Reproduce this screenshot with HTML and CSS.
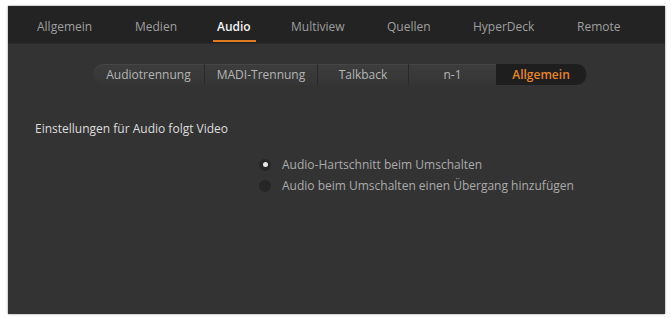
FILE: index.html
```html
<!DOCTYPE html>
<html>
<head>
<meta charset="utf-8">
<link rel="stylesheet" href="styles.css">
</head>
<body>
<div class="panel">
  <nav class="tabs">
    <span class="tab">Allgemein</span>
    <span class="tab">Medien</span>
    <span class="tab active">Audio</span>
    <span class="tab">Multiview</span>
    <span class="tab">Quellen</span>
    <span class="tab">HyperDeck</span>
    <span class="tab">Remote</span>
  </nav>
  <div class="content">
    <div class="segments">
      <span class="seg s1">Audiotrennung</span>
      <span class="seg s2">MADI-Trennung</span>
      <span class="seg s3">Talkback</span>
      <span class="seg s4">n-1</span>
      <span class="seg s5 on">Allgemein</span>
    </div>
    <div class="heading">Einstellungen für Audio folgt Video</div>
    <div class="options">
      <div class="opt"><span class="radio checked"></span>Audio-Hartschnitt beim Umschalten</div>
      <div class="opt"><span class="radio"></span>Audio beim Umschalten einen Übergang hinzufügen</div>
    </div>
  </div>
</div>
</body>
</html>
```
FILE: styles.css
```css
html, body { margin: 0; padding: 0; background: #fff; }
body {
  width: 671px; height: 318px;
  padding: 6px 6px 0 8px;
  box-sizing: border-box;
  font-family: "Open Sans", "Noto Sans", sans-serif;
}
.panel {
  width: 657px; height: 308px;
  background: #333333;
  box-shadow: 0 0 2px rgba(0,0,0,0.5);
  display: flex; flex-direction: column;
}
.tabs {
  height: 38px;
  box-sizing: border-box;
  background: #232323;
  display: flex;
  align-items: stretch;
  padding: 3px 0 0 29px;
  border-bottom: 1px solid #2a2a2a;
}
.tab {
  color: #9f9f9f;
  font-size: 12px;
  display: flex; align-items: center;
  position: relative;
}
.tab:nth-child(1) { width: 98px; }
.tab:nth-child(2) { width: 82px; }
.tab:nth-child(3) { width: 74px; }
.tab:nth-child(4) { width: 96px; }
.tab:nth-child(5) { width: 86px; }
.tab:nth-child(6) { width: 104px; }
.tab:nth-child(7) { width: 60px; }
.tab.active { color: #f2f2f2; font-weight: 600; }
.tab.active::after {
  content: ""; position: absolute;
  left: -4px; width: 43px; bottom: 1px; height: 2px;
  background: #e07a1f;
}
.content { padding: 20px 0 0 27px; }
.segments {
  margin-left: 58px;
  display: flex;
  height: 21px;
  width: 494px;
}
.seg {
  display: flex; align-items: center; justify-content: center;
  background: linear-gradient(#3d3d3d, #353535);
  color: #b5b5b5;
  font-size: 12px;
  border-right: 1px solid #2a2a2a;
  box-shadow: inset 0 1px 0 rgba(255,255,255,0.05);
}
.s1 { width: 111px; border-radius: 11px 0 0 11px; }
.s2 { width: 112px; }
.s3 { width: 90px; }
.s4 { width: 87px; border-right: none; }
.s5 { width: 90px; border-radius: 0 11px 11px 0; }
.seg.on {
  background: #1e1e1e;
  color: #e8852a;
  font-weight: 600;
  box-shadow: none;
}
.heading {
  margin-top: 35px;
  color: #dedede;
  font-size: 12px;
  line-height: 17px;
}
.options {
  margin: 19px 0 0 224px;
  display: flex; flex-direction: column; gap: 4px;
}
.opt {
  display: flex; align-items: center;
  color: #ababab;
  font-size: 12px;
  height: 17px;
}
.radio {
  width: 12px; height: 12px; border-radius: 50%;
  background: #262626;
  margin-right: 11px;
  display: flex; align-items: center; justify-content: center;
}
.radio.checked::after {
  content: ""; width: 5px; height: 5px; border-radius: 50%;
  background: #e6e6e6;
}
```
